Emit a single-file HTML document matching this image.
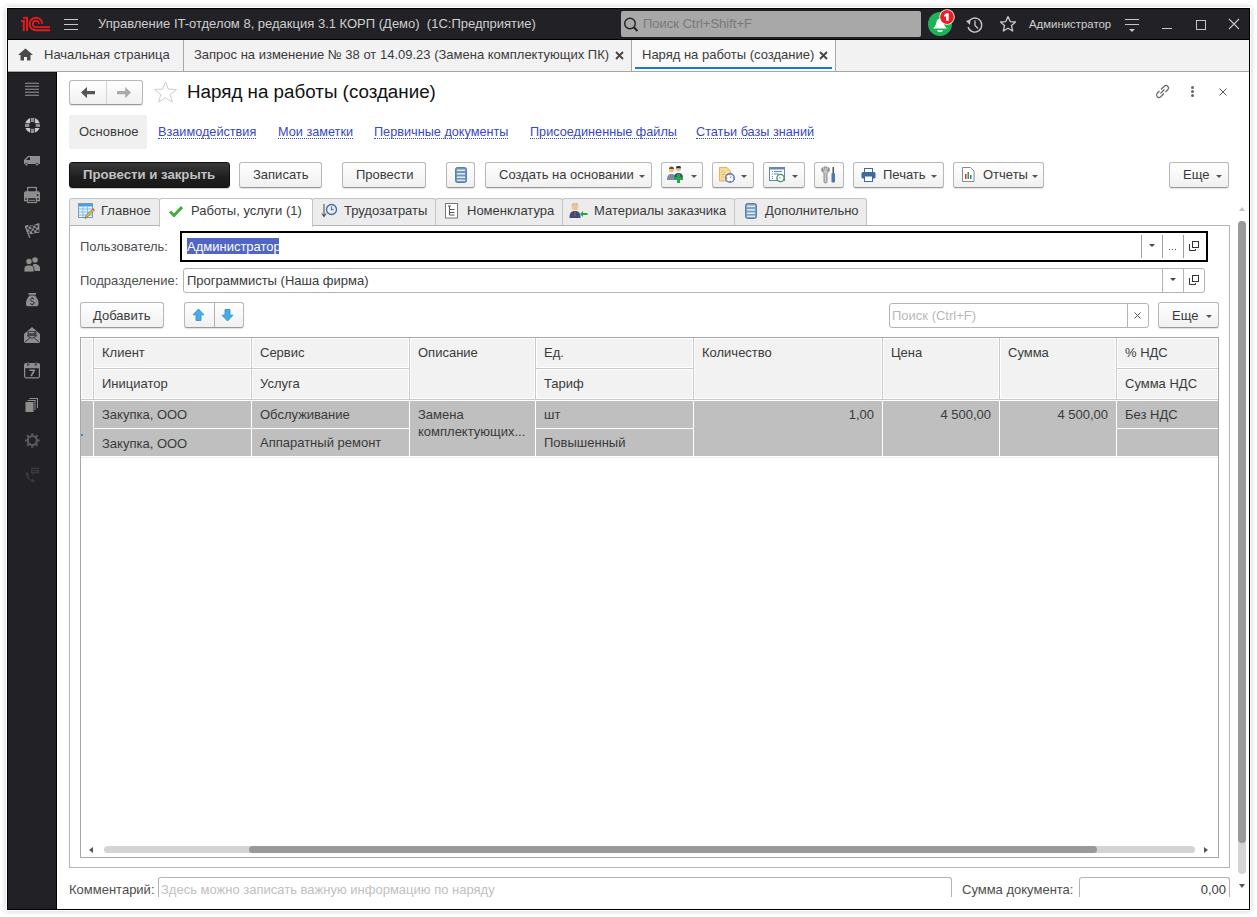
<!DOCTYPE html>
<html><head><meta charset="utf-8">
<style>
*{box-sizing:border-box;margin:0;padding:0}
html,body{width:1257px;height:917px;overflow:hidden;background:#fff;font-family:"Liberation Sans",sans-serif;font-size:13.33px;color:#4d4d4d}
.a{position:absolute}
.t{position:absolute;white-space:nowrap;line-height:16px}
.btn{position:absolute;height:26px;border:1px solid #b8b8b8;border-bottom-color:#999;border-radius:3px;background:linear-gradient(#fff,#f0f0f0);box-shadow:0 1px 1px rgba(0,0,0,.12)}
.dd{position:absolute;width:0;height:0;border-left:3px solid transparent;border-right:3px solid transparent;border-top:3px solid #555}
.tab{position:absolute;top:198px;height:27px;background:#ececec;border:1px solid #c4c4c4;border-bottom:none;border-radius:3px 3px 0 0}
.lnk{color:#3848c4;border-bottom:1px dotted #3848c4;line-height:12px;font-size:12.7px!important}
</style></head><body>
<!-- window frame -->
<div class="a" style="left:6px;top:7px;width:1245px;height:904px;box-shadow:0 0 6px rgba(0,0,0,.2)"></div>
<div class="a" style="left:7px;top:8px;width:1243px;height:902px;border:1px solid #000;background:#fff"></div>
<!-- title bar -->
<div class="a" style="left:8px;top:9px;width:1241px;height:30px;background:#222226"></div>
<div class="a" style="left:8px;top:39px;width:1241px;height:1px;background:#000"></div>
<!-- tab bar -->
<div class="a" style="left:8px;top:40px;width:1241px;height:31px;background:#f2f2f2"></div>
<div class="a" style="left:8px;top:71px;width:1241px;height:1px;background:#a6a6a6"></div>
<!-- sidebar -->
<div class="a" style="left:8px;top:72px;width:49px;height:837px;background:#222226"></div>
<div class="a" style="left:56px;top:72px;width:1px;height:837px;background:#000"></div>
<div class="a" style="left:8px;top:72px;width:48px;height:1px;background:#151518"></div>


<!-- title contents -->
<svg class="a" style="left:16px;top:12px" width="40" height="24" viewBox="16 12 40 24">
 <g fill="#e31b1f">
  <rect x="23" y="16.9" width="5" height="1.9"/><rect x="26" y="16.9" width="2" height="14.2"/><rect x="22.8" y="20" width="2" height="11.1"/><rect x="21" y="20" width="3.7" height="1.9"/>
 </g>
 <g fill="none" stroke="#e31b1f" stroke-width="1.9">
  <path d="M42.2 23.8 A6.3 6.3 0 1 0 36 30.3 H50"/>
  <path d="M39.1 23.8 A3.2 3.2 0 1 0 36 27.1 H50"/>
 </g>
</svg>
<div class="a" style="left:64px;top:19px;width:14px;height:1px;background:#c8c8c8"></div>
<div class="a" style="left:64px;top:24px;width:14px;height:1px;background:#c8c8c8"></div>
<div class="a" style="left:64px;top:29px;width:14px;height:1px;background:#c8c8c8"></div>
<div class="t" style="left:98px;top:16px;font-size:13px;color:#cfcfcf">Управление IT-отделом 8, редакция 3.1 КОРП (Демо)&nbsp; (1С:Предприятие)</div>
<div class="a" style="left:621px;top:11px;width:300px;height:26px;background:#a8a8a8;border-radius:2px"></div>
<svg class="a" style="left:623px;top:17px" width="17" height="16" viewBox="0 0 17 16"><circle cx="7" cy="6.5" r="5.3" fill="none" stroke="#222" stroke-width="1.4"/><path d="M10.8 10.3 L14.5 14" stroke="#222" stroke-width="2"/></svg>
<div class="t" style="left:643px;top:16px;font-size:13px;color:#787878">Поиск Ctrl+Shift+F</div>
<div class="a" style="left:928px;top:12px;width:24px;height:24px;border-radius:50%;background:#1fb25a"></div>
<svg class="a" style="left:922px;top:8px" width="40" height="30" viewBox="922 8 40 30">
<path d="M933 28.6 H947 C945 27 944 25 943.5 22 C943 19.5 942 18.8 940 18.8 C938 18.8 937 19.5 936.5 22 C936 25 935 27 933 28.6Z" fill="#fff"/>
<path d="M937 30.2 H943 C942.5 31.5 941.5 32 940 32 C938.5 32 937.5 31.5 937 30.2Z" fill="#fff"/>
<circle cx="947" cy="17" r="7.7" fill="#fff"/><circle cx="947" cy="17" r="6.9" fill="#ee1c24"/>
<path d="M946.1 13.2 H948.7 V20.8 H946.1 V15.9 C945.5 16.3 944.7 16.6 944 16.7 V14.9 C945 14.6 945.7 14 946.1 13.2Z" fill="#fff"/>
</svg>
<svg class="a" style="left:964px;top:16px" width="20" height="18" viewBox="0 0 20 18"><path d="M4.2 6.5 A7 7 0 1 1 4 11" fill="none" stroke="#c8c8c8" stroke-width="1.3"/><path d="M2 5 L6 9 L6.5 3.5Z" fill="#c8c8c8"/><path d="M11 4.5 V9.5 L14 12.5" fill="none" stroke="#c8c8c8" stroke-width="1.3"/></svg>
<svg class="a" style="left:999px;top:15px" width="18" height="18" viewBox="0 0 18 18"><path d="M9 1.5 L11.2 6.6 L16.5 7 L12.5 10.6 L13.7 16 L9 13.2 L4.3 16 L5.5 10.6 L1.5 7 L6.8 6.6Z" fill="none" stroke="#c8c8c8" stroke-width="1.3" stroke-linejoin="round"/></svg>
<div class="t" style="left:1029px;top:16px;font-size:11.4px;color:#cfcfcf">Администратор</div>
<div class="a" style="left:1125px;top:19px;width:14px;height:1px;background:#c8c8c8"></div>
<div class="a" style="left:1125px;top:24px;width:14px;height:1px;background:#c8c8c8"></div>
<div class="dd" style="left:1129px;top:29px;border-width:3px 3px 0;border-top-color:#c8c8c8"></div>
<div class="a" style="left:1162px;top:28px;width:10px;height:1px;background:#c8c8c8"></div>
<div class="a" style="left:1196px;top:20px;width:10px;height:10px;border:1px solid #c8c8c8"></div>
<svg class="a" style="left:1228px;top:18px" width="12" height="12" viewBox="0 0 12 12"><path d="M1 1 L11 11 M11 1 L1 11" stroke="#c8c8c8" stroke-width="1.1"/></svg>

<!-- tab bar contents -->
<svg class="a" style="left:18px;top:48px" width="15" height="13" viewBox="0 0 15 13"><path d="M7.5 0.5 L15 7 H12.5 V12.5 H9 V9 H6 V12.5 H2.5 V7 H0 Z" fill="#4a4a4a"/></svg>
<div class="t" style="left:44px;top:47px;font-size:13px;color:#3a3a3a">Начальная страница</div>
<div class="a" style="left:183px;top:40px;width:1px;height:31px;background:#a6a6a6"></div>
<div class="t" style="left:194px;top:47px;font-size:13px;color:#3a3a3a">Запрос на изменение № 38 от 14.09.23 (Замена комплектующих ПК)</div>
<svg class="a" style="left:615px;top:51px" width="9" height="9" viewBox="0 0 9 9"><path d="M1 1 L8 8 M8 1 L1 8" stroke="#444" stroke-width="1.8"/></svg>
<div class="a" style="left:631px;top:40px;width:1px;height:31px;background:#a6a6a6"></div>
<div class="a" style="left:632px;top:40px;width:203px;height:31px;background:#fafafa"></div>
<div class="t" style="left:642px;top:47px;font-size:13px;color:#3a3a3a">Наряд на работы (создание)</div>
<svg class="a" style="left:819px;top:51px" width="9" height="9" viewBox="0 0 9 9"><path d="M1 1 L8 8 M8 1 L1 8" stroke="#444" stroke-width="1.8"/></svg>
<div class="a" style="left:635px;top:67px;width:197px;height:2px;background:#1c7ad6"></div>
<div class="a" style="left:835px;top:40px;width:1px;height:31px;background:#a6a6a6"></div>

<!-- form header -->
<div class="btn" style="left:69px;top:80px;width:74px;height:25px"></div>
<div class="a" style="left:106px;top:81px;width:1px;height:23px;background:#d4d4d4"></div>
<svg class="a" style="left:76px;top:84px" width="60" height="18" viewBox="76 84 60 18"><path d="M81 92.6 L87 87 V91 H95 V94.2 H87 V98.2Z" fill="#555"/><path d="M131 92.6 L125.2 87 V91 H117 V94.2 H125.2 V98.2Z" fill="#aaa"/></svg>

<svg class="a" style="left:153px;top:81px" width="25" height="22" viewBox="0 0 25 22"><path d="M12.5 1 L15.4 8.1 L23.5 8.5 L17.2 13.5 L19.3 21 L12.5 16.8 L5.7 21 L7.8 13.5 L1.5 8.5 L9.6 8.1Z" fill="none" stroke="#c9ced6" stroke-width="1" stroke-linejoin="round"/></svg>
<div class="t" style="left:187px;top:81px;font-size:18.8px;line-height:22px;color:#111">Наряд на работы (создание)</div>
<!-- link icon / more / close -->
<svg class="a" style="left:1154px;top:83px" width="17" height="17" viewBox="0 0 17 17"><g fill="none" stroke="#666" stroke-width="1.2"><path d="M7 6.5 L10.5 3 A2.5 2.5 0 0 1 14 6.5 L11.5 9"/><path d="M10 10.5 L6.5 14 A2.5 2.5 0 0 1 3 10.5 L5.5 8"/><path d="M6.5 10.5 L10.5 6.5"/></g></svg>
<div class="a" style="left:1191px;top:86px;width:3px;height:3px;border-radius:50%;background:#666"></div>
<div class="a" style="left:1191px;top:90px;width:3px;height:3px;border-radius:50%;background:#666"></div>
<div class="a" style="left:1191px;top:94px;width:3px;height:3px;border-radius:50%;background:#666"></div>
<svg class="a" style="left:1219px;top:88px" width="8" height="8" viewBox="0 0 8 8"><path d="M0.5 0.5 L7.5 7.5 M7.5 0.5 L0.5 7.5" stroke="#555" stroke-width="1"/></svg>
<!-- link bar -->
<div class="a" style="left:69px;top:115px;width:78px;height:34px;background:#f0f0f0;border-radius:3px"></div>
<div class="t" style="left:79px;top:124px;font-size:13px;color:#3a3a3a">Основное</div>
<div class="t lnk" style="left:158px;top:126px;font-size:13px">Взаимодействия</div>
<div class="t lnk" style="left:278px;top:126px;font-size:13px">Мои заметки</div>
<div class="t lnk" style="left:374px;top:126px;font-size:13px">Первичные документы</div>
<div class="t lnk" style="left:530px;top:126px;font-size:13px">Присоединенные файлы</div>
<div class="t lnk" style="left:696px;top:126px;font-size:13px">Статьи базы знаний</div>

<!-- toolbar -->
<div class="a" style="left:69px;top:162px;width:161px;height:26px;border-radius:3px;background:linear-gradient(#3a3a3a,#1e1e1e 60%,#181818);border:1px solid #111;box-shadow:0 1px 1px rgba(0,0,0,.2)"></div>
<div class="t" style="left:83px;top:167px;font-size:13.2px;font-weight:bold;color:#c2c2c2">Провести и закрыть</div>
<div class="btn" style="left:239px;top:162px;width:83px"></div>
<div class="t" style="left:253px;top:167px;font-size:13px;color:#3a3a3a">Записать</div>
<div class="btn" style="left:342px;top:162px;width:84px"></div>
<div class="t" style="left:356px;top:167px;font-size:13px;color:#3a3a3a">Провести</div>
<div class="btn" style="left:446px;top:162px;width:29px"></div>
<svg class="a" style="left:455px;top:167px" width="12" height="16" viewBox="0 0 12 16"><rect x="0.5" y="0.5" width="11" height="15" rx="2" fill="#6f95b8" stroke="#5a7fa3"/><g fill="#d9e8f5"><rect x="2" y="2.5" width="8" height="1.6"/><rect x="2" y="6" width="8" height="1.6"/><rect x="2" y="9.4" width="8" height="1.6"/><rect x="2" y="12.6" width="8" height="1.4"/></g></svg>
<div class="btn" style="left:485px;top:162px;width:167px"></div>
<div class="t" style="left:499px;top:167px;font-size:13px;color:#3a3a3a">Создать на основании</div>
<div class="dd" style="left:639px;top:175px"></div>
<div class="btn" style="left:661px;top:162px;width:42px"></div>
<svg class="a" style="left:667px;top:166px" width="19" height="18" viewBox="0 0 19 18"><circle cx="4.5" cy="4" r="2.5" fill="#e8c48a"/><path d="M2 3 A2.5 2.5 0 0 1 7 3Z" fill="#7a4a1a"/><path d="M0 14 C0 9 2 8 4.5 8 C7 8 9 9 9 14Z" fill="#6e8fb3"/><path d="M4 8.5 L5 8.5 L5 13 L4 13Z" fill="#d66"/><circle cx="11.5" cy="3" r="2.5" fill="#e8c48a"/><path d="M9 2.2 A2.5 2.5 0 0 1 14 2.2Z" fill="#2a3350"/><path d="M7 12 C7 8 9 7 11.5 7 C14 7 16 8 16 12Z" fill="#3e4f7a"/><path d="M10 8 H13 V11 H16 V14 H13 V17 H10 V14 H7 V11 H10Z" fill="#2aa34a"/></svg>
<div class="dd" style="left:691px;top:175px"></div>
<div class="btn" style="left:712px;top:162px;width:42px"></div>
<svg class="a" style="left:719px;top:167px" width="17" height="16" viewBox="0 0 17 16"><path d="M0.5 0.5 H8 L11.5 4 V14 H0.5Z" fill="#f3dc9a" stroke="#d9b95a"/><g stroke="#d9b95a" stroke-width="0.8"><path d="M2.5 5 H6 M2.5 7.5 H7 M2.5 10 H5"/></g><circle cx="11" cy="11" r="4.3" fill="#fff" stroke="#4f7fc0" stroke-width="1.4"/><g fill="#e02020"><rect x="10.5" y="7.3" width="1" height="1"/><rect x="10.5" y="13.7" width="1" height="1"/><rect x="7.3" y="10.5" width="1" height="1"/><rect x="13.7" y="10.5" width="1" height="1"/></g><path d="M11 11 L12.5 8.8" stroke="#4f7fc0" stroke-width="0.8"/></svg>
<div class="dd" style="left:741px;top:175px"></div>
<div class="btn" style="left:763px;top:162px;width:42px"></div>
<svg class="a" style="left:769px;top:167px" width="18" height="16" viewBox="0 0 18 16"><rect x="0.5" y="0.5" width="15" height="13" fill="#fff" stroke="#6a86a8"/><rect x="0.5" y="0.5" width="15" height="2" fill="#6a86a8"/><g fill="#5a8ad0"><rect x="3" y="4" width="1" height="1"/><rect x="3" y="6.5" width="1" height="1"/><rect x="3" y="9" width="1" height="1"/><rect x="3" y="11" width="1" height="1"/><rect x="5" y="4" width="8" height="1"/><rect x="5" y="6.5" width="5" height="1"/></g><circle cx="11.5" cy="11" r="3.6" fill="#fff" stroke="#3f9a5a" stroke-width="1.3"/><path d="M10.5 10 L11.8 11.3" stroke="#456" stroke-width="0.8"/></svg>
<div class="dd" style="left:792px;top:175px"></div>
<div class="btn" style="left:814px;top:162px;width:30px"></div>
<svg class="a" style="left:821px;top:166px" width="16" height="18" viewBox="0 0 16 18"><path d="M1.5 1.5 C0 3.5 0.5 6 3 7 V15.5 A1.5 1.5 0 0 0 6 15.5 V7 C8.5 6 9 3.5 7.5 1.5 V4.5 H6 V1 H3 V4.5 H1.5Z" fill="#c8c8c8" stroke="#777" stroke-width="0.8"/><rect x="11.5" y="1" width="1.5" height="6" fill="#555"/><rect x="10.5" y="7" width="3.5" height="9.5" rx="1" fill="#4a78b0"/></svg>
<div class="btn" style="left:853px;top:162px;width:91px"></div>
<svg class="a" style="left:861px;top:168px" width="15" height="14" viewBox="0 0 15 14"><rect x="3.5" y="0.5" width="8" height="4" fill="#fff" stroke="#3d6a9c"/><rect x="0.5" y="4" width="14" height="6.5" rx="1.5" fill="#3d6a9c"/><rect x="3.5" y="8" width="8" height="5.5" fill="#fff" stroke="#3d6a9c"/></svg>
<div class="t" style="left:883px;top:167px;font-size:13px;color:#3a3a3a">Печать</div>
<div class="dd" style="left:931px;top:175px"></div>
<div class="btn" style="left:953px;top:162px;width:91px"></div>
<svg class="a" style="left:962px;top:167px" width="13" height="16" viewBox="0 0 13 16"><path d="M0.5 0.5 H8.5 L12 4 V14.5 H0.5Z" fill="#fff" stroke="#8a8a8a"/><rect x="3" y="7" width="1.5" height="5" fill="#e03030"/><rect x="5.5" y="5" width="1.5" height="7" fill="#30a030"/><rect x="8" y="8" width="1.5" height="4" fill="#3070c0"/></svg>
<div class="t" style="left:983px;top:167px;font-size:13px;color:#3a3a3a">Отчеты</div>
<div class="dd" style="left:1032px;top:175px"></div>
<div class="btn" style="left:1169px;top:162px;width:60px"></div>
<div class="t" style="left:1183px;top:167px;font-size:13px;color:#3a3a3a">Еще</div>
<div class="dd" style="left:1216px;top:175px"></div>

<!-- tabs -->
<div class="a" style="left:69px;top:225px;width:1161px;height:643px;border:1px solid #b4b4b4;background:#fff"></div>
<div class="tab" style="left:69px;width:91px"></div>
<div class="tab" style="left:159px;width:154px;background:#fff;height:29px"></div>
<div class="tab" style="left:312px;width:124px"></div>
<div class="tab" style="left:435px;width:128px"></div>
<div class="tab" style="left:562px;width:173px"></div>
<div class="tab" style="left:734px;width:133px"></div>
<svg class="a" style="left:78px;top:203px" width="17" height="16" viewBox="0 0 17 16"><rect x="0.5" y="0.5" width="14" height="14" fill="#e8f3fb" stroke="#7a9ab8"/><rect x="1" y="1" width="13" height="2.5" fill="#4aa0e0"/><g stroke="#7fc0ef" stroke-width="1"><path d="M1 6 H14 M1 9 H14 M1 12 H14 M5 3.5 V14 M9.5 3.5 V14"/></g><path d="M7 15.5 L8 12.5 L14.5 6 L16 7.5 L9.5 14Z" fill="#f0c030" stroke="#555" stroke-width="0.6"/><path d="M14.5 6 L16 7.5 L16.7 6.8 L15.2 5.3Z" fill="#e04050"/></svg>
<div class="t" style="left:101px;top:203px;font-size:13px;color:#3a3a3a">Главное</div>
<svg class="a" style="left:169px;top:205px" width="14" height="12" viewBox="0 0 14 12"><path d="M1 6.5 L5 10.5 L13 2" fill="none" stroke="#3fae3f" stroke-width="3"/></svg>
<div class="t" style="left:191px;top:203px;font-size:13px;color:#3a3a3a">Работы, услуги (1)</div>
<svg class="a" style="left:321px;top:203px" width="17" height="16" viewBox="0 0 17 16"><path d="M3 1 V13 M0.8 10.5 L3 13.5 L5.2 10.5" fill="none" stroke="#555" stroke-width="1.1"/><circle cx="10.5" cy="6.5" r="5" fill="none" stroke="#3d6aa8" stroke-width="1.3"/><path d="M10.5 3.5 V6.8 H12.8" fill="none" stroke="#3d6aa8" stroke-width="1.1"/></svg>
<div class="t" style="left:344px;top:203px;font-size:13px;color:#3a3a3a">Трудозатраты</div>
<svg class="a" style="left:445px;top:203px" width="13" height="16" viewBox="0 0 13 16"><rect x="0.5" y="0.5" width="12" height="14.5" fill="#fff" stroke="#777"/><g stroke="#555" stroke-width="1"><path d="M3 3 H6 M4.5 3 V12 M4.5 6.5 H9.5 M4.5 9.5 H9.5 M4.5 12 H9.5"/></g></svg>
<div class="t" style="left:467px;top:203px;font-size:13px;color:#3a3a3a">Номенклатура</div>
<svg class="a" style="left:569px;top:202px" width="19" height="17" viewBox="0 0 19 17"><circle cx="6" cy="5" r="3.3" fill="#e9c592"/><path d="M2.7 4.5 A3.3 3.3 0 0 1 9.3 4.5 L9 3 C8 1 4 1 3 3Z" fill="#2a2a2a"/><path d="M0.5 16 C0.5 10.5 2.5 9 6 9 C9.5 9 11.5 10.5 11.5 16Z" fill="#3b4c7a"/><path d="M5.3 9.5 H6.7 L6.5 14 H5.5Z" fill="#d04040"/><path d="M11 12 L14 9 V11 H18.5 V13 H14 V15Z" fill="#2aa040"/></svg>
<div class="t" style="left:594px;top:203px;font-size:13px;color:#3a3a3a">Материалы заказчика</div>
<svg class="a" style="left:745px;top:203px" width="12" height="16" viewBox="0 0 12 16"><rect x="0.5" y="0.5" width="11" height="15" rx="2" fill="#7b9dbf" stroke="#5a7fa3"/><g fill="#dbe8f3"><rect x="2" y="2.5" width="8" height="1.6"/><rect x="2" y="6" width="8" height="1.6"/><rect x="2" y="9.4" width="8" height="1.6"/><rect x="2" y="12.6" width="8" height="1.4"/></g></svg>
<div class="t" style="left:765px;top:203px;font-size:13px;color:#3a3a3a">Дополнительно</div>

<!-- fields -->
<div class="t" style="left:80px;top:239px;font-size:13px;color:#4d4d4d">Пользователь:</div>
<div class="a" style="left:180px;top:231px;width:1028px;height:31px;border:2px solid #000;background:#fff"></div>
<div class="a" style="left:187px;top:238px;width:92px;height:16px;background:#5065c4"></div>
<div class="t" style="left:187px;top:239px;font-size:13px;color:#fff">Администратор</div>
<div class="a" style="left:1141px;top:235px;width:1px;height:23px;background:#a0a0a0"></div><div class="a" style="left:1162px;top:235px;width:1px;height:23px;background:#a0a0a0"></div>
<div class="a" style="left:1183px;top:235px;width:1px;height:23px;background:#a0a0a0"></div>
<div class="dd" style="left:1149px;top:244px;border-top-color:#444"></div>
<div class="a" style="left:1169px;top:249px;width:1px;height:1px;background:#555"></div>
<div class="a" style="left:1172px;top:249px;width:1px;height:1px;background:#555"></div>
<div class="a" style="left:1175px;top:249px;width:1px;height:1px;background:#555"></div>
<svg class="a" style="left:1189px;top:240px" width="11" height="11" viewBox="0 0 11 11"><path d="M0.5 4 V10.5 H6.5 V9" fill="none" stroke="#333" stroke-width="1"/><rect x="3.5" y="1.5" width="6" height="6" fill="none" stroke="#333" stroke-width="1"/></svg>

<div class="t" style="left:80px;top:273px;font-size:13px;color:#4d4d4d">Подразделение:</div>
<div class="a" style="left:183px;top:268px;width:1022px;height:25px;border:1px solid #b4b4b4;border-radius:3px;background:#fff"></div>
<div class="t" style="left:187px;top:273px;font-size:13px;color:#3a3a3a">Программисты (Наша фирма)</div>
<div class="a" style="left:1162px;top:269px;width:1px;height:23px;background:#b4b4b4"></div>
<div class="a" style="left:1183px;top:269px;width:1px;height:23px;background:#b4b4b4"></div>
<div class="dd" style="left:1170px;top:278px;border-top-color:#444"></div>
<svg class="a" style="left:1189px;top:274px" width="11" height="11" viewBox="0 0 11 11"><path d="M0.5 4 V10.5 H6.5 V9" fill="none" stroke="#333" stroke-width="1"/><rect x="3.5" y="1.5" width="6" height="6" fill="none" stroke="#333" stroke-width="1"/></svg>

<!-- table toolbar -->
<div class="btn" style="left:80px;top:302px;width:84px;height:26px"></div>
<div class="t" style="left:93px;top:308px;font-size:13px;color:#3a3a3a">Добавить</div>
<div class="btn" style="left:184px;top:302px;width:60px;height:26px"></div>
<div class="a" style="left:214px;top:303px;width:1px;height:24px;background:#b0b0b0"></div>
<svg class="a" style="left:192px;top:308px" width="13" height="14" viewBox="0 0 13 14"><path d="M6.5 1 L12 6.8 H9 V12.5 H4 V6.8 H1Z" fill="#45aee8" stroke="#2a8ac8" stroke-width="0.8" stroke-linejoin="round"/></svg>
<svg class="a" style="left:221px;top:308px" width="13" height="14" viewBox="0 0 13 14"><path d="M6.5 13 L12 7.2 H9 V1.5 H4 V7.2 H1Z" fill="#45aee8" stroke="#2a8ac8" stroke-width="0.8" stroke-linejoin="round"/></svg>
<div class="a" style="left:889px;top:303px;width:260px;height:25px;border:1px solid #b4b4b4;border-radius:3px;background:#fff"></div>
<div class="a" style="left:1127px;top:304px;width:1px;height:23px;background:#b4b4b4"></div>
<div class="t" style="left:892px;top:308px;font-size:13px;color:#b8b8b8">Поиск (Ctrl+F)</div>
<svg class="a" style="left:1134px;top:312px" width="7" height="7" viewBox="0 0 7 7"><path d="M0.5 0.5 L6.5 6.5 M6.5 0.5 L0.5 6.5" stroke="#555" stroke-width="1"/></svg>
<div class="btn" style="left:1158px;top:302px;width:61px;height:26px"></div>
<div class="t" style="left:1172px;top:308px;font-size:13px;color:#3a3a3a">Еще</div>
<div class="dd" style="left:1206px;top:315px"></div>

<!-- table -->
<div class="a" style="left:80px;top:337px;width:1139px;height:521px;border:1px solid #a8a8a8;background:#fff"></div>
<div class="a" style="left:81px;top:338px;width:1137px;height:61px;background:#fff"></div>
<div class="a" style="left:81px;top:399px;width:1137px;height:1px;background:#c9c9c9"></div>
<div class="a" style="left:82px;top:339px;width:10px;height:59px;background:#f2f2f2"></div>
<div class="a" style="left:93px;top:338px;width:1px;height:61px;background:#c9c9c9"></div>
<div class="a" style="left:95px;top:339px;width:155px;height:28px;background:#f2f2f2"></div>
<div class="a" style="left:94px;top:368px;width:157px;height:1px;background:#c9c9c9"></div>
<div class="a" style="left:95px;top:370px;width:155px;height:28px;background:#f2f2f2"></div>
<div class="a" style="left:251px;top:338px;width:1px;height:61px;background:#c9c9c9"></div>
<div class="a" style="left:253px;top:339px;width:155px;height:28px;background:#f2f2f2"></div>
<div class="a" style="left:252px;top:368px;width:157px;height:1px;background:#c9c9c9"></div>
<div class="a" style="left:253px;top:370px;width:155px;height:28px;background:#f2f2f2"></div>
<div class="a" style="left:409px;top:338px;width:1px;height:61px;background:#c9c9c9"></div>
<div class="a" style="left:411px;top:339px;width:123px;height:59px;background:#f2f2f2"></div>
<div class="a" style="left:535px;top:338px;width:1px;height:61px;background:#c9c9c9"></div>
<div class="a" style="left:537px;top:339px;width:155px;height:28px;background:#f2f2f2"></div>
<div class="a" style="left:536px;top:368px;width:157px;height:1px;background:#c9c9c9"></div>
<div class="a" style="left:537px;top:370px;width:155px;height:28px;background:#f2f2f2"></div>
<div class="a" style="left:693px;top:338px;width:1px;height:61px;background:#c9c9c9"></div>
<div class="a" style="left:695px;top:339px;width:186px;height:59px;background:#f2f2f2"></div>
<div class="a" style="left:882px;top:338px;width:1px;height:61px;background:#c9c9c9"></div>
<div class="a" style="left:884px;top:339px;width:114px;height:59px;background:#f2f2f2"></div>
<div class="a" style="left:999px;top:338px;width:1px;height:61px;background:#c9c9c9"></div>
<div class="a" style="left:1001px;top:339px;width:114px;height:59px;background:#f2f2f2"></div>
<div class="a" style="left:1116px;top:338px;width:1px;height:61px;background:#c9c9c9"></div>
<div class="a" style="left:1118px;top:339px;width:99px;height:28px;background:#f2f2f2"></div>
<div class="a" style="left:1117px;top:368px;width:101px;height:1px;background:#c9c9c9"></div>
<div class="a" style="left:1118px;top:370px;width:99px;height:28px;background:#f2f2f2"></div>
<div class="a" style="left:81px;top:400px;width:1137px;height:57px;background:#fff"></div>
<div class="a" style="left:81px;top:401px;width:12px;height:55px;background:#bfbfbf"></div>
<div class="a" style="left:94px;top:401px;width:157px;height:27px;background:#bfbfbf"></div>
<div class="a" style="left:94px;top:429px;width:157px;height:27px;background:#bfbfbf"></div>
<div class="a" style="left:252px;top:401px;width:157px;height:27px;background:#bfbfbf"></div>
<div class="a" style="left:252px;top:429px;width:157px;height:27px;background:#bfbfbf"></div>
<div class="a" style="left:410px;top:401px;width:125px;height:55px;background:#bfbfbf"></div>
<div class="a" style="left:536px;top:401px;width:157px;height:27px;background:#bfbfbf"></div>
<div class="a" style="left:536px;top:429px;width:157px;height:27px;background:#bfbfbf"></div>
<div class="a" style="left:694px;top:401px;width:188px;height:55px;background:#bfbfbf"></div>
<div class="a" style="left:883px;top:401px;width:116px;height:55px;background:#bfbfbf"></div>
<div class="a" style="left:1000px;top:401px;width:116px;height:55px;background:#bfbfbf"></div>
<div class="a" style="left:1117px;top:401px;width:101px;height:27px;background:#bfbfbf"></div>
<div class="a" style="left:1117px;top:429px;width:101px;height:27px;background:#bfbfbf"></div>
<div class="a" style="left:81px;top:457px;width:1137px;height:1px;background:#ececec"></div>
<div class="t" style="left:102px;top:345px;font-size:13px;color:#3a3a3a">Клиент</div>
<div class="t" style="left:260px;top:345px;font-size:13px;color:#3a3a3a">Сервис</div>
<div class="t" style="left:418px;top:345px;font-size:13px;color:#3a3a3a">Описание</div>
<div class="t" style="left:544px;top:345px;font-size:13px;color:#3a3a3a">Ед.</div>
<div class="t" style="left:702px;top:345px;font-size:13px;color:#3a3a3a">Количество</div>
<div class="t" style="left:891px;top:345px;font-size:13px;color:#3a3a3a">Цена</div>
<div class="t" style="left:1008px;top:345px;font-size:13px;color:#3a3a3a">Сумма</div>
<div class="t" style="left:1125px;top:345px;font-size:13px;color:#3a3a3a">% НДС</div>
<div class="t" style="left:102px;top:376px;font-size:13px;color:#3a3a3a">Инициатор</div>
<div class="t" style="left:260px;top:376px;font-size:13px;color:#3a3a3a">Услуга</div>
<div class="t" style="left:544px;top:376px;font-size:13px;color:#3a3a3a">Тариф</div>
<div class="t" style="left:1125px;top:376px;font-size:13px;color:#3a3a3a">Сумма НДС</div>
<div class="t" style="left:102px;top:407px;font-size:13px;color:#3a3a3a">Закупка, ООО</div>
<div class="t" style="left:260px;top:407px;font-size:13px;color:#3a3a3a">Обслуживание</div>
<div class="t" style="left:418px;top:407px;font-size:13px;color:#3a3a3a">Замена</div>
<div class="t" style="left:544px;top:407px;font-size:13px;color:#3a3a3a">шт</div>
<div class="t" style="left:674px;width:200px;text-align:right;top:407px;font-size:13px;color:#3a3a3a">1,00</div>
<div class="t" style="left:791px;width:200px;text-align:right;top:407px;font-size:13px;color:#3a3a3a">4 500,00</div>
<div class="t" style="left:908px;width:200px;text-align:right;top:407px;font-size:13px;color:#3a3a3a">4 500,00</div>
<div class="t" style="left:1125px;top:407px;font-size:13px;color:#3a3a3a">Без НДС</div>
<div class="t" style="left:102px;top:436px;font-size:13px;color:#3a3a3a">Закупка, ООО</div>
<div class="t" style="left:260px;top:435px;font-size:13px;color:#3a3a3a">Аппаратный ремонт</div>
<div class="t" style="left:418px;top:424px;font-size:13px;color:#3a3a3a">комплектующих...</div>
<div class="t" style="left:544px;top:435px;font-size:13px;color:#3a3a3a">Повышенный</div>

<div class="a" style="left:81px;top:434px;width:2px;height:2px;background:#4a7fc0"></div>
<!-- sidebar icons -->
<svg class="a" style="left:8px;top:72px" width="49" height="420" viewBox="8 72 49 420">
 <g fill="#8e8e8e">
  <rect x="25" y="82.7" width="14" height="1.1"/><rect x="25" y="85.7" width="14" height="1.1"/><rect x="25" y="88.7" width="14" height="1.1"/><rect x="25" y="91.7" width="14" height="1.1"/><rect x="25" y="94.7" width="14" height="1.1"/>
 </g>
 <g>
  <clipPath id="lbc"><circle cx="32.5" cy="125.4" r="7.6"/></clipPath>
  <g clip-path="url(#lbc)" fill="#c8c8c8"><rect x="24" y="117" width="6.2" height="6.2"/><rect x="34.8" y="117" width="6.2" height="6.2"/><rect x="24" y="128" width="6.2" height="6.2"/><rect x="34.8" y="128" width="6.2" height="6.2"/></g>
  <g fill="#8e8e8e"><rect x="31" y="117.9" width="3" height="4.2"/><rect x="31" y="128.8" width="3" height="4.2"/><rect x="25" y="123.9" width="4.3" height="3.1"/><rect x="35.7" y="123.9" width="4.3" height="3.1"/></g>
 </g>
 <path d="M24 163.5 V160 L28 156 H40 V164 H24Z" fill="#8e8e8e"/><circle cx="26.5" cy="164.6" r="1.4" fill="#8e8e8e" stroke="#222226" stroke-width="0.6"/><circle cx="37" cy="164.6" r="1.4" fill="#8e8e8e" stroke="#222226" stroke-width="0.6"/><path d="M26 160 L28.5 157.3 H30 V160Z" fill="#222226"/>
 <rect x="27.6" y="187.5" width="8.8" height="6" fill="none" stroke="#8e8e8e" stroke-width="1.2"/>
 <path d="M24 193 Q24 191.3 25.7 191.3 H38.3 Q40 191.3 40 193 V201.3 H24Z" fill="#8e8e8e"/>
 <rect x="36.8" y="194.3" width="1.6" height="1.6" fill="#222226"/><rect x="25.2" y="198.2" width="1.6" height="1.6" fill="#222226"/><rect x="37.2" y="198.2" width="1.6" height="1.6" fill="#222226"/>
 <rect x="27.6" y="197.6" width="8.8" height="4.9" fill="#222226" stroke="#8e8e8e" stroke-width="1.2"/>
 <rect x="29" y="199.8" width="6" height="1" fill="#8e8e8e"/>
 <clipPath id="flg"><path d="M25 226.2 C28 223.6 31 226.6 34 224.8 C36 223.8 38 223.3 39.4 222.9 V232.6 C37 233.4 35 232.8 33 233.8 C30.5 235 28.8 233 27.6 233.8 Z"/></clipPath>
 <g clip-path="url(#flg)"><rect x="24" y="222" width="16" height="13" fill="#8e8e8e"/>
  <g fill="#2a2a2e" transform="rotate(-12 32 228)"><rect x="28.8" y="224" width="2.3" height="2.3"/><rect x="33.4" y="224" width="2.3" height="2.3"/><rect x="26.5" y="226.3" width="2.3" height="2.3"/><rect x="31.1" y="226.3" width="2.3" height="2.3"/><rect x="35.7" y="226.3" width="2.3" height="2.3"/><rect x="28.8" y="228.6" width="2.3" height="2.3"/><rect x="33.4" y="228.6" width="2.3" height="2.3"/><rect x="26.5" y="230.9" width="2.3" height="2.3"/><rect x="31.1" y="230.9" width="2.3" height="2.3"/><rect x="35.7" y="230.9" width="2.3" height="2.3"/></g></g>
 <path d="M25.3 226 L29.8 237.8" stroke="#8e8e8e" stroke-width="1.3"/>
 <g fill="#8e8e8e"><circle cx="35" cy="260" r="2.8"/><path d="M31.5 271 C31.5 265.5 33 264 35 264 C37.5 264 40 265.5 40 268.5 V271Z"/></g>
 <g fill="#8e8e8e" stroke="#222226" stroke-width="0.8"><circle cx="29" cy="261.5" r="3.2"/><path d="M24 272 V269 C24 266 26 265 29 265 C32 265 34 266 34 269 V272Z"/></g>
 <g fill="#8e8e8e"><rect x="28.5" y="293" width="7.5" height="1.8"/><path d="M29.5 295.5 H35 C38 299 38.5 301 38.5 303.5 C38.5 305.5 37.5 306.3 36 306.3 H28 C26.5 306.3 26 305.5 26 303.5 C26 301 26.5 299 29.5 295.5Z"/></g>
 <path d="M34 299.3 C33.5 298.6 32.8 298.4 32.2 298.4 C31 298.4 30.4 299 30.4 299.8 C30.4 301.6 34.2 301 34.2 303 C34.2 303.9 33.4 304.4 32.2 304.4 C31.4 304.4 30.7 304.1 30.3 303.5 M32.2 297.3 V298.4 M32.2 304.4 V305.4" fill="none" stroke="#222226" stroke-width="0.9"/>
 <g><path d="M24 334 L32 327 L40 334 V343 H24Z" fill="#8e8e8e"/><rect x="27.5" y="331" width="9" height="5" fill="#444"/><path d="M24.3 342.7 L30 337.5 M39.7 342.7 L34 337.5" stroke="#222226" stroke-width="0.8"/><path d="M27 335.5 L32 338.5 L37 335.5" fill="none" stroke="#222226" stroke-width="0.8"/><rect x="29" y="332" width="5" height="1.2" fill="#8e8e8e"/></g>
 <g><rect x="24.6" y="363.6" width="14.8" height="14.2" rx="1.5" fill="none" stroke="#8e8e8e" stroke-width="1.2"/><rect x="24.6" y="363.6" width="14.8" height="4.6" fill="#8e8e8e"/><rect x="27.3" y="361.8" width="1.6" height="3.4" fill="#8e8e8e" stroke="#222226" stroke-width="0.6"/><rect x="35.1" y="361.8" width="1.6" height="3.4" fill="#8e8e8e" stroke="#222226" stroke-width="0.6"/><path d="M29.4 369.6 H35 V371 L32 376.2 H30.1 L33 371 H29.4Z" fill="#8e8e8e"/></g>
 <g fill="#8e8e8e"><rect x="25.5" y="402" width="8" height="10"/><rect x="27.5" y="400" width="8" height="1"/><rect x="34.5" y="400" width="1" height="10"/><rect x="29.5" y="398" width="8.5" height="1"/><rect x="37" y="398" width="1" height="10"/></g>
 <g transform="translate(32.3 440.5)"><circle r="4.5" fill="none" stroke="#5a5a5a" stroke-width="2.2"/><g stroke="#5a5a5a" stroke-width="2.2"><path d="M0 -7.3 V-5 M0 7.3 V5 M-7.3 0 H-5 M7.3 0 H5 M-5.2 -5.2 L-3.5 -3.5 M5.2 5.2 L3.5 3.5 M-5.2 5.2 L-3.5 3.5 M5.2 -5.2 L3.5 -3.5"/></g></g>
 <path d="M25.8 472.5 C24.5 474 27 479.5 32.5 482.3 C33.5 482.6 34.5 481.8 35 481 L33 478.8 L31.5 479.8 C30 479 28.8 477.5 28.3 476 L29.5 474.8 L27.5 472 C27 471.8 26.3 472 25.8 472.5Z" fill="#38383a"/>
 <path d="M31 467.5 H39 V473.5 H34.5 L32.5 475.5 V473.5 H31Z" fill="#38383a"/><rect x="32.2" y="469.2" width="5.6" height="0.8" fill="#222226"/><rect x="32.2" y="471.2" width="4" height="0.8" fill="#222226"/>
</svg>
<!-- table h-scroll -->
<div class="a" style="left:89px;top:847px;width:0;height:0;border-top:3px solid transparent;border-bottom:3px solid transparent;border-right:4px solid #555"></div>
<div class="a" style="left:104px;top:846px;width:1091px;height:7px;border-radius:4px;background:#d4d4d4"></div>
<div class="a" style="left:249px;top:846px;width:848px;height:7px;border-radius:4px;background:#999"></div>
<div class="a" style="left:1204px;top:847px;width:0;height:0;border-top:3px solid transparent;border-bottom:3px solid transparent;border-left:4px solid #555"></div>
<!-- page v-scroll -->
<div class="a" style="left:1239px;top:207px;width:0;height:0;border-left:3px solid transparent;border-right:3px solid transparent;border-bottom:4px solid #c4c4c4"></div>
<div class="a" style="left:1238px;top:221px;width:8px;height:653px;border-radius:4px;background:#d4d4d4"></div>
<div class="a" style="left:1238px;top:221px;width:8px;height:622px;border-radius:4px;background:#999"></div>
<div class="dd" style="left:1239px;top:884px;border-width:4px 3px 0;border-top-color:#555"></div>
<!-- footer -->
<div class="t" style="left:69px;top:882px;font-size:13px;color:#4d4d4d">Комментарий:</div>
<div class="a" style="left:158px;top:877px;width:794px;height:20px;border:1px solid #b4b4b4;border-bottom:none;border-radius:3px 3px 0 0;background:#fff"></div>
<div class="t" style="left:161px;top:882px;font-size:13px;color:#c0c0c0">Здесь можно записать важную информацию по наряду</div>
<div class="t" style="left:962px;top:882px;font-size:13px;color:#4d4d4d">Сумма документа:</div>
<div class="a" style="left:1079px;top:877px;width:151px;height:20px;border:1px solid #b4b4b4;border-bottom:none;border-radius:3px 3px 0 0;background:#fff"></div>
<div class="t" style="left:1026px;width:200px;text-align:right;top:882px;font-size:13px;color:#3a3a3a">0,00</div>
<!-- bottom cover & window border -->
<div class="a" style="left:57px;top:897px;width:1192px;height:12px;background:#fff"></div>
<div class="a" style="left:7px;top:909px;width:1243px;height:1px;background:#000"></div>
</body></html>
